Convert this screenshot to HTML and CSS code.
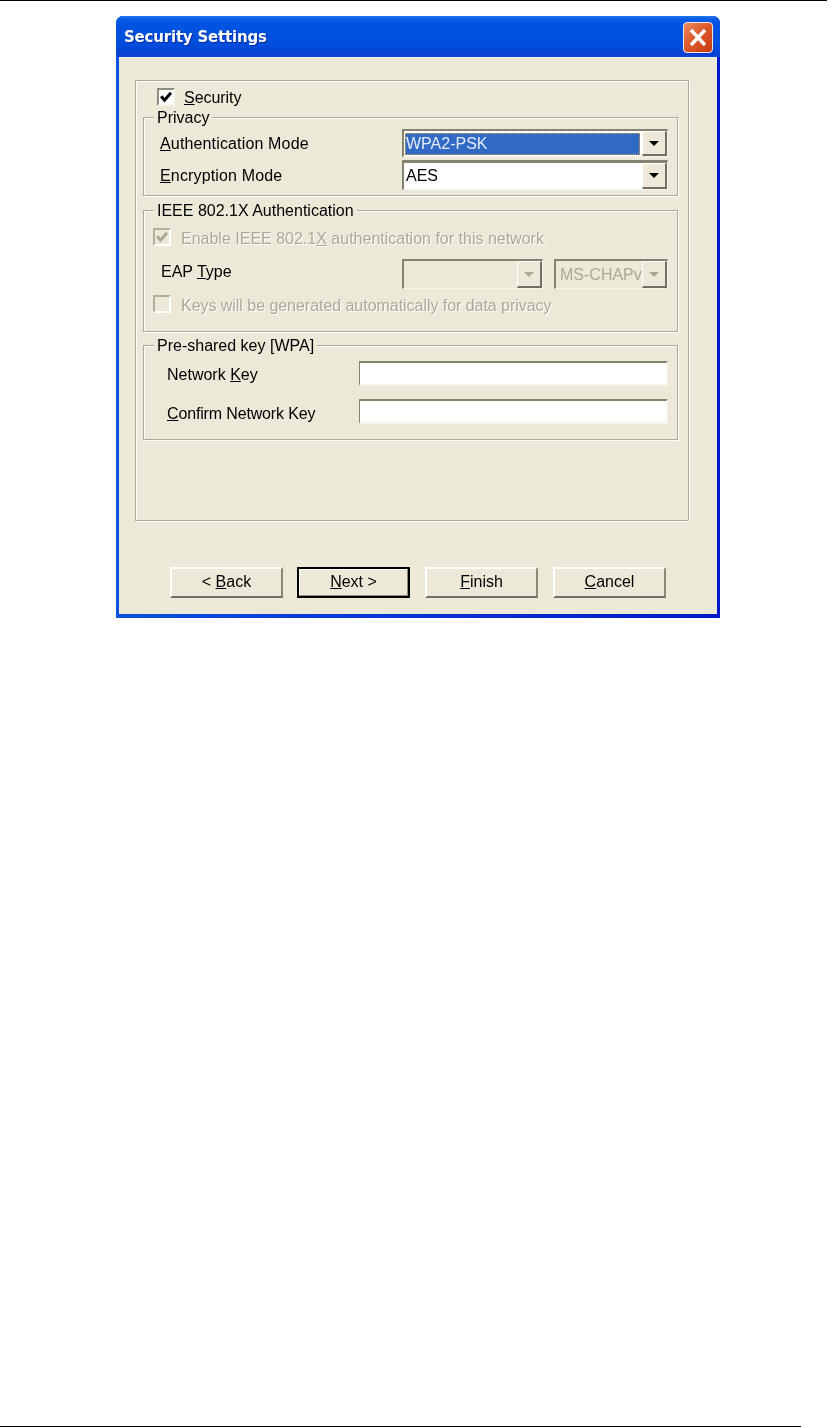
FILE: index.html
```html
<!DOCTYPE html>
<html lang="en">
<head>
<meta charset="utf-8">
<title>Security Settings</title>
<link rel="stylesheet" href="styles.css">
</head>
<body>
<div class="rule rule-top"></div>
<main class="window">
  <header class="titlebar">
    <h1 class="title">Security Settings</h1>
    <div class="close">
      <svg viewBox="0 0 30 31" width="30" height="31" aria-hidden="true"><path d="M8 8 L22 23 M22 8 L8 23" stroke="#fff" stroke-width="3.4" fill="none"/></svg>
    </div>
  </header>
  <div class="client">
    <div class="outer">
      <div class="check-row security">
        <span class="check"><svg viewBox="0 0 14 14" width="14" height="14"><path d="M2.2 6.2 L5.5 10.2 L12 2.8" stroke="#000" stroke-width="3" fill="none"/></svg></span>
        <span class="check-text"><u>S</u>ecurity</span>
      </div>

      <section class="group privacy">
        <div class="legend">Privacy</div>
        <div class="row row-auth">
          <span class="row-label"><u>A</u>uthentication Mode</span>
          <div class="combo combo-wide">
            <span class="field selected">WPA2-PSK</span>
            <span class="arrow"><i class="tri"></i></span>
          </div>
        </div>
        <div class="row row-enc">
          <span class="row-label"><u>E</u>ncryption Mode</span>
          <div class="combo combo-wide combo-tall">
            <span class="field">AES</span>
            <span class="arrow"><i class="tri"></i></span>
          </div>
        </div>
      </section>

      <section class="group ieee">
        <div class="legend">IEEE 802.1X Authentication</div>
        <div class="check-row enable">
          <span class="check off"><svg viewBox="0 0 14 14" width="14" height="14"><path d="M2.2 6.2 L5.5 10.2 L12 2.8" stroke="#aca899" stroke-width="3" fill="none"/></svg></span>
          <span class="check-text dim">Enable IEEE 802.1<u>X</u> authentication for this network</span>
        </div>
        <div class="row row-eap">
          <span class="row-label eap-label">EAP <u>T</u>ype</span>
          <div class="combo combo-eap disabled">
            <span class="field"></span>
            <span class="arrow"><i class="tri"></i></span>
          </div>
          <div class="combo combo-ms disabled">
            <span class="field dim-plain">MS-CHAPv</span>
            <span class="arrow"><i class="tri"></i></span>
          </div>
        </div>
        <div class="check-row keys">
          <span class="check off"></span>
          <span class="check-text dim keys-text">Keys will be <u>g</u>enerated automatically for data privacy</span>
        </div>
      </section>

      <section class="group psk">
        <div class="legend">Pre-shared key [WPA]</div>
        <div class="row row-key1">
          <span class="row-label key-label">Network <u>K</u>ey</span>
          <div class="edit"></div>
        </div>
        <div class="row row-key2">
          <span class="row-label key-label confirm"><u>C</u>onfirm Network Key</span>
          <div class="edit"></div>
        </div>
      </section>
    </div>

    <footer class="buttons">
      <div class="btn"><span>&lt; <u>B</u>ack</span></div>
      <div class="btn default"><span><u>N</u>ext &gt;</span></div>
      <div class="btn"><span><u>F</u>inish</span></div>
      <div class="btn"><span><u>C</u>ancel</span></div>
    </footer>
  </div>
</main>
<div class="rule rule-bottom"></div>
</body>
</html>
```
FILE: styles.css
```css
* { box-sizing: border-box; }
html, body { margin: 0; padding: 0; background: #fff; }
body {
  width: 837px;
  height: 1427px;
  display: flex;
  flex-direction: column;
  font-family: "Liberation Sans", Arial, sans-serif;
  font-size: 16px;
  color: #000;
  overflow: hidden;
}
.rule { height: 1px; background: #000; flex: none; }
.rule-top { width: 827px; }
.rule-bottom { margin-top: auto; width: 801px; }

.window {
  flex: none;
  width: 604px;
  height: 602px;
  margin: 15px 0 0 116px;
  padding: 0 3px 4px;
  border-radius: 7px 7px 0 0;
  background: linear-gradient(90deg, #0b5ae6 0, #0a4fdc 3px, #0831d9 50%, #0018c8 100%);
  filter: blur(0.5px);
  display: flex;
  flex-direction: column;
}
.titlebar {
  flex: none;
  height: 41px;
  margin: 0 -3px;
  padding: 6px 7px 0 8px;
  border-radius: 7px 7px 0 0;
  display: flex;
  justify-content: space-between;
  align-items: flex-start;
  background: linear-gradient(180deg, #1f78ee 0, #0a5de8 3px, #0053e1 8px, #0050dd 24px, #0348d8 34px, #0a3fd0 38px, #0b48dc 41px);
}
.title {
  margin: 5px 0 0;
  font-family: "DejaVu Sans", sans-serif;
  font-size: 15px;
  letter-spacing: -0.2px;
  line-height: 20px;
  font-weight: bold;
  color: #fff;
  text-shadow: 1px 1px 1px #0a2a9a;
}
.close {
  width: 30px;
  height: 31px;
  border: 1px solid #f4e6df;
  border-radius: 4px;
  background: linear-gradient(135deg, #ec8a63 0, #dd5a2d 45%, #c63a0c 100%);
  display: flex;
  align-items: center;
  justify-content: center;
}
.close svg { flex: none; margin: -1px; }

.client {
  flex: 1;
  background: #ece9d8;
  padding: 23px 0 0 16px;
  display: flex;
  flex-direction: column;
}
.outer {
  flex: none;
  width: 554px;
  height: 441px;
  border: 1px solid #aca899;
  box-shadow: 1px 1px 0 #fff, inset 1px 1px 0 #fff;
  padding: 7px 0 0 7px;
}
.group {
  width: 535px;
  border: 1px solid #aca899;
  box-shadow: 1px 1px 0 #fff, inset 1px 1px 0 #fff;
}
.legend {
  width: fit-content;
  height: 18px;
  line-height: 18px;
  margin: -9px 0 0 10px;
  padding: 0 3px;
  background: #ece9d8;
}
.privacy { height: 79px; margin-top: 11px; }
.ieee { height: 122px; margin-top: 14px; }
.psk { height: 95px; margin-top: 13px; }

.row { display: flex; align-items: center; }
.row-label { flex: none; line-height: 18px; }
.row-auth { margin-top: 2px; height: 28px; }
.row-enc { margin-top: 3px; height: 30px; }
.row-auth .row-label, .row-enc .row-label {
  width: 242px;
  margin-left: 16px;
  padding-top: 2px;
  letter-spacing: 0.15px;
}
.row-eap { margin-top: 13px; height: 30px; }
.eap-label { width: 241px; margin-left: 17px; padding-bottom: 4px; }
.row-key1 { margin-top: 6px; height: 25px; }
.row-key2 { margin-top: 13px; height: 25px; }
.key-label { width: 192px; margin-left: 23px; padding-top: 2px; }
.confirm { padding-top: 4px; letter-spacing: -0.15px; }

.check-row { display: flex; align-items: center; height: 18px; }
.check {
  flex: none;
  width: 18px;
  height: 18px;
  border: 2px solid;
  border-color: #8f8c7d #f7f5ec #f7f5ec #8f8c7d;
  background: #fff;
  display: flex;
  align-items: center;
  justify-content: center;
}
.check.off {
  background: #ece9d8;
  border-color: #b3b0a1 #fff #fff #b3b0a1;
}
.check-text { line-height: 18px; }
.security { margin-left: 14px; }
.security .check-text { margin-left: 9px; padding-top: 2px; letter-spacing: -0.05px; }
.enable { margin: 8px 0 0 9px; }
.keys { margin: 6px 0 0 9px; }
.enable .check-text, .keys .check-text { margin-left: 10px; padding-top: 4px; }
.keys-text { letter-spacing: -0.04px; }
.dim, .dim-plain { color: #aca899; }
.dim { text-shadow: 1px 1px 0 #fff; }

.combo {
  flex: none;
  height: 100%;
  border: 2px solid;
  border-color: #85826f #f6f4eb #f6f4eb #85826f;
  border-right-width: 1px;
  border-bottom-width: 1px;
  background: #fff;
  display: flex;
}
.combo-wide { width: 266px; }
.combo-tall { border-top-width: 3px; }
.combo.disabled { background: #ece9d8; }
.combo-eap { width: 141px; margin-right: 11px; }
.combo-ms { width: 114px; }
.field {
  flex: 1;
  min-width: 0;
  overflow: hidden;
  white-space: nowrap;
  line-height: 26px;
  padding-left: 2px;
}
.selected {
  margin: 2px 2px 1px 1px;
  line-height: 22px;
  padding-left: 1px;
  background: #316ac5;
  color: #e4ebf6;
  outline: 1px dotted #d9a13a;
  outline-offset: -1px;
}
.combo-ms .field { padding-left: 4px; line-height: 28px; }
.arrow {
  flex: none;
  width: 25px;
  background: #ece9d8;
  border: 2px solid;
  border-color: #fff #716f64 #716f64 #fff;
  border-top-width: 1px;
  border-left-width: 1px;
  display: flex;
  align-items: center;
  justify-content: center;
}
.tri {
  width: 0;
  height: 0;
  border-style: solid;
  border-width: 5px 5.5px 0;
  border-color: #000 transparent transparent;
}
.disabled .tri { border-top-color: #aca899; }

.edit {
  flex: none;
  width: 309px;
  height: 100%;
  background: #fff;
  border: 2px solid;
  border-color: #85826f #f6f4eb #f6f4eb #85826f;
  border-left-width: 1px;
}

.buttons {
  flex: none;
  display: flex;
  gap: 15px;
  margin: 46px 0 0 35px;
}
.btn {
  flex: none;
  width: 113px;
  height: 31px;
  border: 2px solid;
  border-color: #fff #8a8878 #716f64 #fff;
  background: #ece9d8;
  display: flex;
  align-items: center;
  justify-content: center;
  padding-bottom: 2px;
}
.btn:first-child { margin-right: -1px; }
.btn.default {
  border: 2px solid #000;
  box-shadow: inset -1px -1px 0 #8a8878, inset 1px 1px 0 #fff;
}
```
